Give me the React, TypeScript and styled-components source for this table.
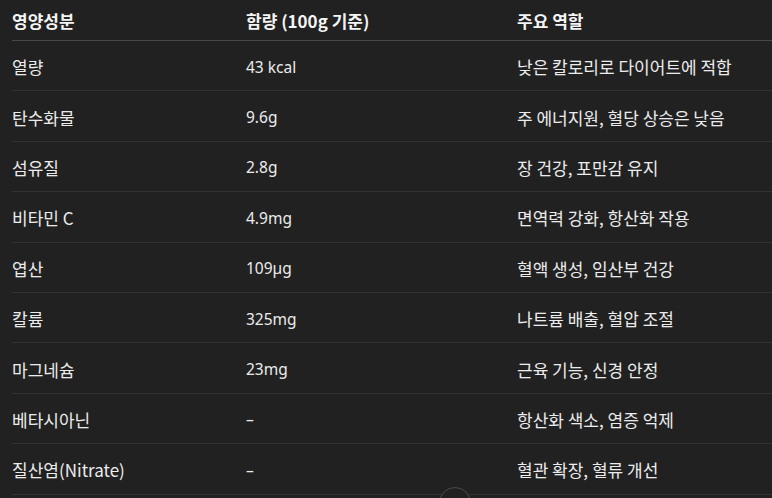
import { FC } from 'react';
import styled, { createGlobalStyle } from 'styled-components';

const Global = createGlobalStyle`
html, body {
  margin: 0;
  padding: 0;
  background: #212121;
  overflow: hidden;
}
body {
  font-family: "Noto Sans CJK KR", "Noto Sans", sans-serif;
  color: #ececec;
}
`;

const Page = styled.div`
position: relative;
width: 772px;
height: 498px;
overflow: hidden;
background: #212121;
`;

const Table = styled.div`
margin-left: 12px;
display: grid;
grid-template-columns: 234px 271px 1fr;
`;

const Row = styled.div<{ $head?: boolean }>`
display: contents;
& > div {
  height: ${p => (p.$head ? '41px' : '50.4px')};
  padding-top: ${p => (p.$head ? '0' : '2px')};
  border-bottom: 1px solid ${p => (p.$head ? '#494949' : '#323232')};
  font-weight: ${p => (p.$head ? 700 : 400)};
  color: ${p => (p.$head ? '#f4f4f4' : '#ececec')};
}
`;

const Cell = styled.div<{ $latin?: boolean }>`
display: flex;
align-items: center;
font-size: ${p => (p.$latin ? '15.5px' : '17px')};
font-family: ${p => (p.$latin ? '"Noto Sans", "Noto Sans CJK KR", sans-serif' : 'inherit')};
white-space: nowrap;
box-sizing: border-box;
`;

const ScrollButton = styled.div`
position: absolute;
left: 439px;
top: 487px;
width: 32px;
height: 32px;
border-radius: 50%;
border: 1px solid #4a4a4a;
background: #212121;
box-sizing: border-box;
`;

const rows = [
  ['열량', '43 kcal', '낮은 칼로리로 다이어트에 적합'],
  ['탄수화물', '9.6g', '주 에너지원, 혈당 상승은 낮음'],
  ['섬유질', '2.8g', '장 건강, 포만감 유지'],
  ['비타민 C', '4.9mg', '면역력 강화, 항산화 작용'],
  ['엽산', '109µg', '혈액 생성, 임산부 건강'],
  ['칼륨', '325mg', '나트륨 배출, 혈압 조절'],
  ['마그네슘', '23mg', '근육 기능, 신경 안정'],
  ['베타시아닌', '–', '항산화 색소, 염증 억제'],
  ['질산염(Nitrate)', '–', '혈관 확장, 혈류 개선'],
];

const App: FC = () => {
  return (<Page>
    <Global />
    <Table>
      <Row $head>
        <Cell>영양성분</Cell>
        <Cell>함량 (100g 기준)</Cell>
        <Cell>주요 역할</Cell>
      </Row>
      {rows.map(r => (
        <Row key={r[0]}>
          <Cell>{r[0]}</Cell>
          <Cell $latin>{r[1]}</Cell>
          <Cell>{r[2]}</Cell>
        </Row>
      ))}
    </Table>
    <ScrollButton />
  </Page>);
};

export default App;
